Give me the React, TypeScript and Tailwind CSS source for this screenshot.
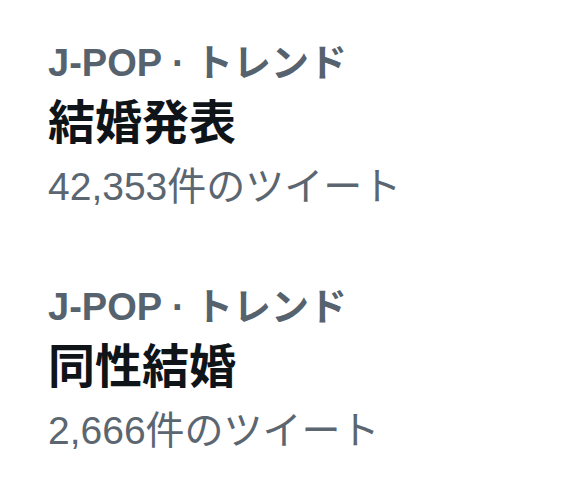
import React from 'react';

interface Trend {
  category: string;
  title: string;
  count: string;
}

const trends: Trend[] = [
  { category: 'J-POP · トレンド', title: '結婚発表', count: '42,353件のツイート' },
  { category: 'J-POP · トレンド', title: '同性結婚', count: '2,666件のツイート' },
];

const App: React.FC = () => {
  return (
    <div
      className="w-[581px] h-[484px] bg-white pl-[48px] pt-[40px] flex flex-col gap-[70px]"
      style={{ fontFamily: '"Liberation Sans", "Noto Sans CJK JP", sans-serif' }}
    >
      {trends.map((t, i) => (
        <div key={i} className="flex flex-col">
          <div className="text-[38px] leading-[46px] font-bold text-[#56626d] whitespace-nowrap">{t.category}</div>
          <div className="text-[47px] leading-[74px] font-bold text-[#0f1419] whitespace-nowrap">{t.title}</div>
          <div className="text-[39px] leading-[54px] text-[#5b6670] whitespace-nowrap">{t.count}</div>
        </div>
      ))}
    </div>
  );
};

export default App;
